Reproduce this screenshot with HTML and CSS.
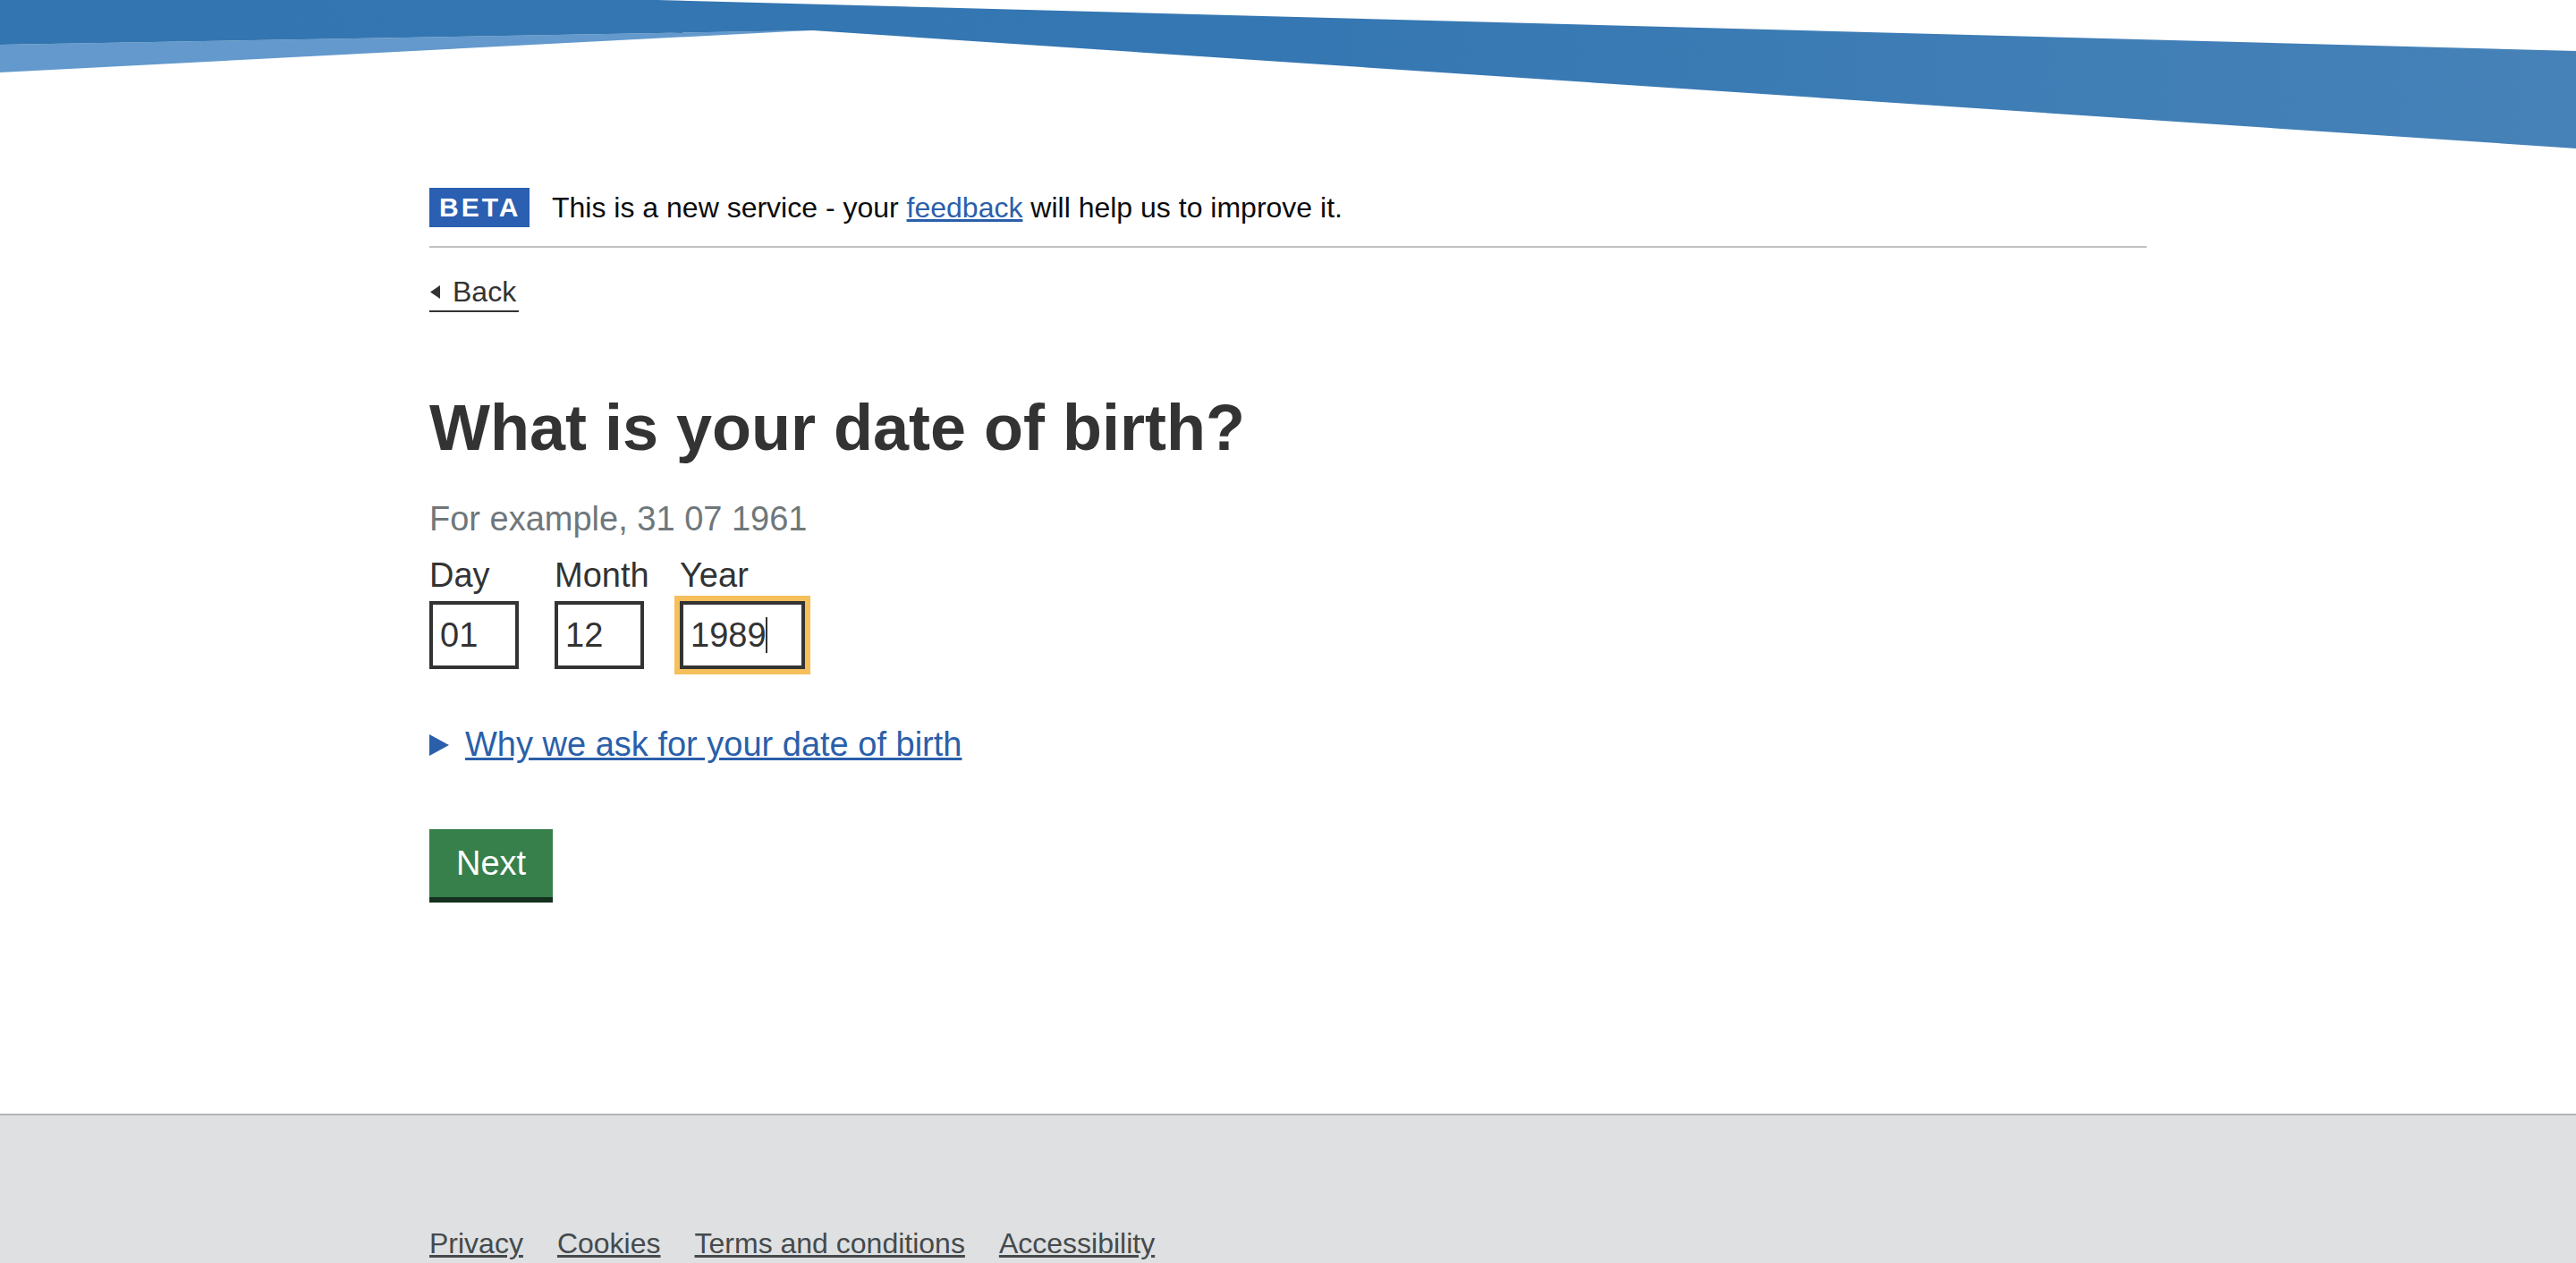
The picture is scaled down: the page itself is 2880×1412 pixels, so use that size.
FILE: index.html
```html
<!DOCTYPE html>
<html lang="en">
<head>
<meta charset="utf-8">
<title>What is your date of birth?</title>
<link rel="stylesheet" href="styles.css">
</head>
<body>
<header class="banner">
  <svg class="banner-art" viewBox="0 0 2880 170" preserveAspectRatio="none" aria-hidden="true">
    <defs>
      <linearGradient id="bandGrad" x1="0" y1="0" x2="1" y2="0">
        <stop offset="0" stop-color="#3375b0"/>
        <stop offset="0.5" stop-color="#3577b2"/>
        <stop offset="1" stop-color="#4682b8"/>
      </linearGradient>
    </defs>
    <polygon points="0,50 905,34 0,81" fill="#6399cc"/>
    <polygon points="0,0 735,0 2880,57 2880,166 909,34 0,50" fill="url(#bandGrad)"/>
  </svg>
</header>

<div class="container">
  <div class="phase-banner">
    <strong class="phase-tag">BETA</strong>
    <span class="phase-text">This is a new service - your <a class="link" href="#">feedback</a> will help us to improve it.</span>
  </div>

  <div class="back-row">
    <a class="back-link" href="#">
      <svg class="back-arrow" viewBox="0 0 11 15" aria-hidden="true"><polygon points="11,0 11,15 0,7.5" fill="#333333"/></svg>
      <span>Back</span>
    </a>
  </div>

  <main class="main">
    <h1 class="heading">What is your date of birth?</h1>
    <div class="hint">For example, 31 07 1961</div>

    <div class="date-input">
      <div class="date-item item-2">
        <label class="date-label" for="dob-day">Day</label>
        <input class="date-field field-2" id="dob-day" type="text" value="01">
      </div>
      <div class="date-item item-2">
        <label class="date-label" for="dob-month">Month</label>
        <input class="date-field field-2" id="dob-month" type="text" value="12">
      </div>
      <div class="date-item item-4">
        <label class="date-label" for="dob-year">Year</label>
        <span class="caret-wrap">
          <input class="date-field field-4 is-focused" id="dob-year" type="text" value="1989">
          <span class="caret"></span>
        </span>
      </div>
    </div>

    <details class="details">
      <summary class="summary">
        <svg class="summary-arrow" viewBox="0 0 22 24" aria-hidden="true"><polygon points="0,0 22,12 0,24" fill="#2b5faa"/></svg>
        <span class="summary-text">Why we ask for your date of birth</span>
      </summary>
    </details>

    <button class="button" type="button">Next</button>
  </main>
</div>

<footer class="footer">
  <div class="container">
    <ul class="footer-links">
      <li><a href="#">Privacy</a></li>
      <li><a href="#">Cookies</a></li>
      <li><a href="#">Terms and conditions</a></li>
      <li><a href="#">Accessibility</a></li>
    </ul>
  </div>
</footer>
</body>
</html>
```

FILE: styles.css
```css
html, body {
  margin: 0;
  padding: 0;
  background: #ffffff;
}

body {
  font-family: "Liberation Sans", Arial, sans-serif;
  color: #333333;
}

.banner {
  display: block;
}

.banner-art {
  display: block;
  width: 100%;
  height: 170px;
}

.container {
  width: 1920px;
  margin: 0 auto;
}

/* Phase banner */
.phase-banner {
  display: flex;
  align-items: center;
  padding-top: 40px;
  padding-bottom: 21px;
  border-bottom: 2px solid #bfc1c3;
}

.phase-tag {
  display: block;
  box-sizing: border-box;
  width: 112px;
  height: 44px;
  line-height: 44px;
  padding: 0 0 0 11px;
  background: #2a5fb1;
  color: #ffffff;
  font-size: 30px;
  font-weight: 700;
  letter-spacing: 3px;
}

.phase-text {
  margin-left: 25px;
  font-size: 32px;
  line-height: 44px;
  color: #0b0c0c;
}

.link {
  color: #2b5faa;
  text-decoration: underline;
}

/* Back link */
.back-row {
  display: flex;
  margin-top: 28px;
}

.back-link {
  display: flex;
  align-items: center;
  gap: 14px;
  padding-right: 3px;
  font-size: 32px;
  line-height: 42px;
  color: #333333;
  text-decoration: none;
  border-bottom: 2px solid #333333;
}

.back-arrow {
  display: block;
  width: 11px;
  height: 15px;
  margin-left: 1px;
}

/* Main question */
.heading {
  margin: 89px 0 0;
  font-size: 72px;
  line-height: 80px;
  font-weight: 700;
  color: #333333;
}

.hint {
  margin-top: 37px;
  font-size: 38px;
  line-height: 50px;
  color: #6f777b;
}

.date-input {
  display: flex;
  gap: 40px;
  margin-top: 13px;
}

.date-item {
  display: flex;
  flex-direction: column;
}

.item-2 {
  width: 100px;
}

.item-4 {
  width: 140px;
}

.date-label {
  display: block;
  font-size: 38px;
  line-height: 50px;
  white-space: nowrap;
  color: #333333;
}

.caret-wrap {
  position: relative;
  display: block;
  margin-top: 4px;
}

.date-field {
  display: block;
  box-sizing: border-box;
  height: 76px;
  margin: 4px 0 0;
  padding: 0 8px;
  border: 4px solid #333333;
  border-radius: 0;
  background: #ffffff;
  font-family: "Liberation Sans", Arial, sans-serif;
  font-size: 38px;
  color: #333333;
  outline: none;
}

.caret-wrap .date-field {
  margin-top: 0;
}

.field-2 {
  width: 100px;
}

.field-4 {
  width: 140px;
}

.is-focused {
  outline: 6px solid #f5bf5b;
  outline-offset: 0;
}

.caret {
  position: absolute;
  left: 96px;
  top: 18px;
  width: 2px;
  height: 40px;
  background: #333333;
}

/* Details */
.details {
  margin-top: 59px;
}

.summary {
  display: flex;
  align-items: center;
  gap: 18px;
  list-style: none;
  cursor: pointer;
  font-size: 38px;
  line-height: 50px;
  color: #2b5faa;
}

.summary::-webkit-details-marker {
  display: none;
}

.summary-arrow {
  display: block;
  width: 22px;
  height: 24px;
  margin-top: 2px;
}

.summary-text {
  text-decoration: underline;
}

/* Button */
.button {
  display: block;
  margin: 70px 0 242px;
  padding: 0 30px;
  height: 76px;
  border: 0;
  border-radius: 0;
  background: #377f4b;
  box-shadow: 0 6px 0 #15301e;
  color: #ffffff;
  font-family: "Liberation Sans", Arial, sans-serif;
  font-size: 38px;
  line-height: 76px;
  cursor: pointer;
}

/* Footer */
.footer {
  border-top: 2px solid #b1b4b6;
  background: #dee0e2;
  padding-top: 123px;
  padding-bottom: 2px;
}

.footer-links {
  display: flex;
  gap: 38px;
  margin: 0;
  padding: 0;
  list-style: none;
}

.footer-links a {
  font-size: 32px;
  line-height: 40px;
  color: #454a4c;
  text-decoration: underline;
}

.footer-links li {
  line-height: 40px;
}
```
